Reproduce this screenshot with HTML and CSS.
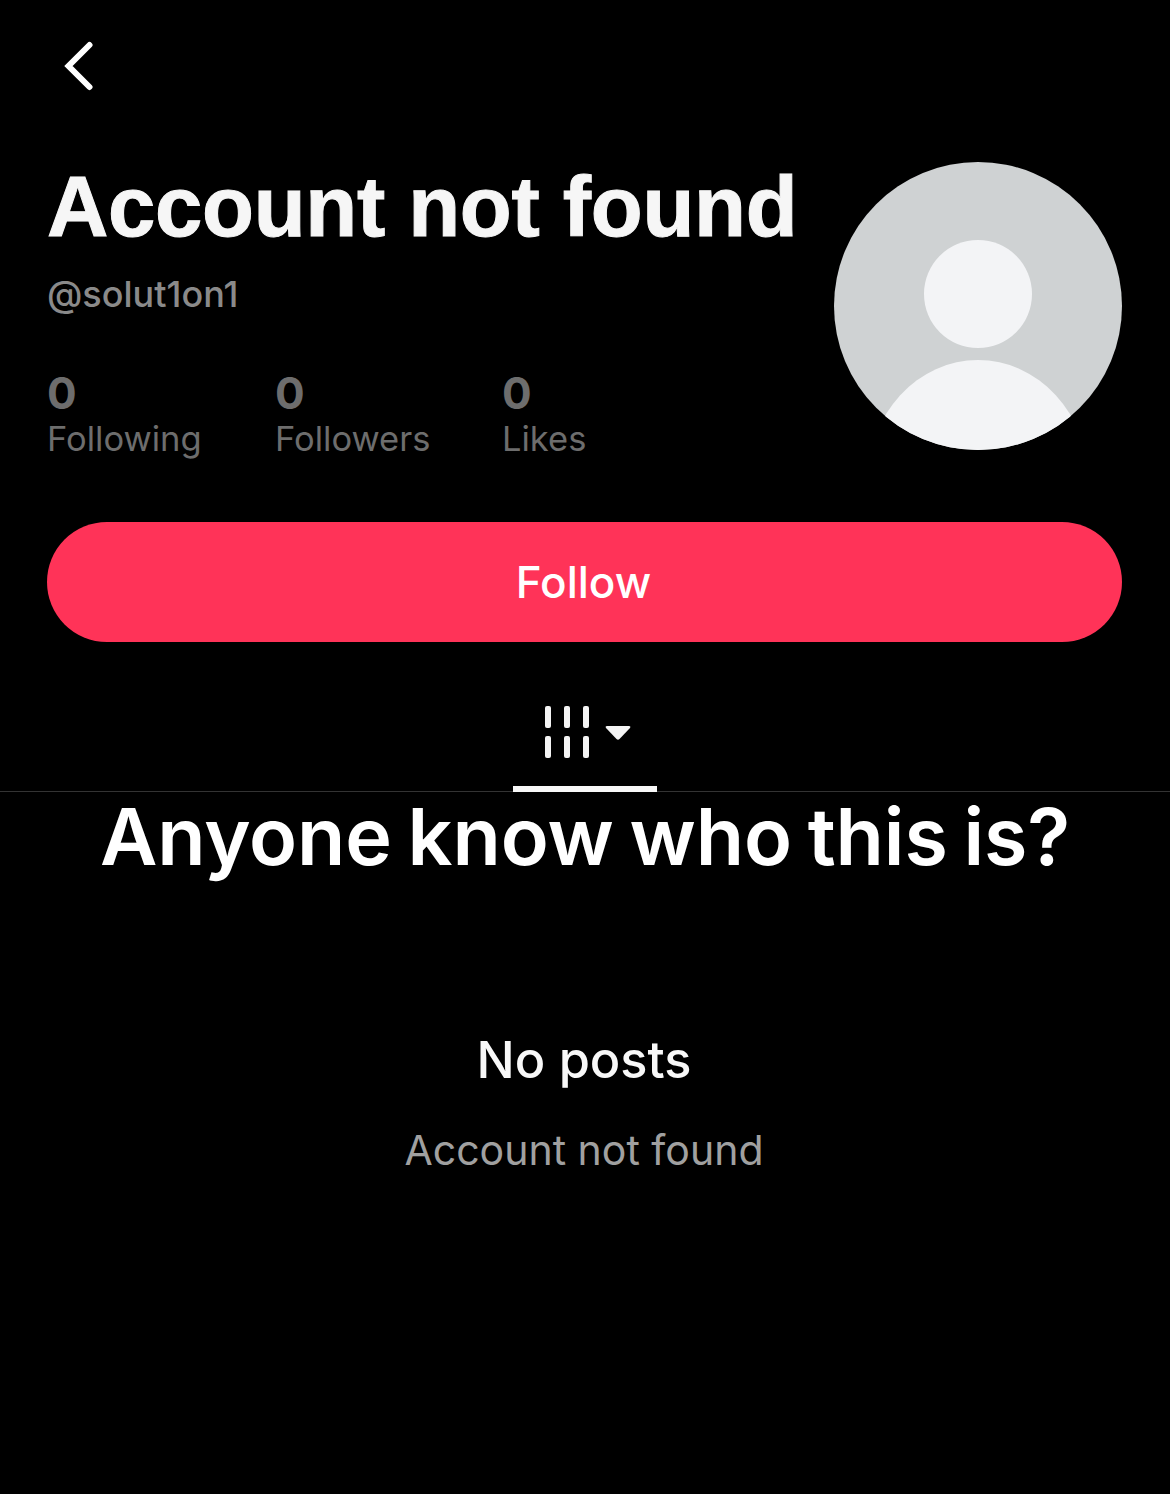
FILE: index.html
```html
<!DOCTYPE html>
<html lang="en">
<head>
<meta charset="utf-8">
<title>Account not found</title>
<link rel="stylesheet" href="styles.css">
</head>
<body>
<main class="page">
  <header class="topbar">
    <svg class="back" width="32" height="50" viewBox="0 0 32 50"><path d="M26.500 4 L5.500 25 L26.500 46" fill="none" stroke="#fff" stroke-width="6" stroke-linecap="round" stroke-linejoin="miter"/></svg>
  </header>
  <section class="profile">
    <div class="info">
      <h1 class="title">Account not found</h1>
      <div class="handle">@solut1on1</div>
      <div class="stats">
        <div class="stat s1"><div class="num">0</div><div class="label">Following</div></div>
        <div class="stat s2"><div class="num">0</div><div class="label">Followers</div></div>
        <div class="stat"><div class="num">0</div><div class="label">Likes</div></div>
      </div>
    </div>
    <svg class="avatar" width="288" height="288" viewBox="0 0 288 288">
      <defs><clipPath id="c"><circle cx="144" cy="144" r="144"/></clipPath></defs>
      <circle cx="144" cy="144" r="144" fill="#cfd2d3"/>
      <circle cx="144" cy="132" r="54" fill="#f3f4f6"/>
      <ellipse cx="144" cy="318" rx="110" ry="120" fill="#f3f4f6" clip-path="url(#c)"/>
    </svg>
  </section>
  <button class="follow">Follow</button>
  <nav class="tabs">
    <div class="tab">
      <svg width="88" height="54" viewBox="0 0 88 54">
        <g fill="#f4f4f4">
          <rect x="2" y="1" width="6" height="22" rx="2"/><rect x="21" y="1" width="6" height="22" rx="2"/><rect x="40" y="1" width="6" height="22" rx="2"/>
          <rect x="2" y="31" width="6" height="22" rx="2"/><rect x="21" y="31" width="6" height="22" rx="2"/><rect x="40" y="31" width="6" height="22" rx="2"/>
          <path d="M64 21 H86 Q88 21 87 23 L76.500 34 Q75 35.500 73.500 34 L63 23 Q62 21 64 21 Z"/>
        </g>
      </svg>
    </div>
  </nav>
  <p class="caption">Anyone know who this is?</p>
  <section class="empty">
    <h2 class="empty-title">No posts</h2>
    <p class="empty-sub">Account not found</p>
  </section>
</main>
</body>
</html>
```
FILE: styles.css
```css
* { box-sizing: border-box; }
html, body { margin: 0; padding: 0; background: #000; }
body { font-family: Inter, "Liberation Sans", sans-serif; color: #fff; height: 1494px; overflow: hidden; }
.page { width: 1170px; }
.topbar { height: 162px; padding: 41px 0 0 63px; }
.back { display: block; }
.profile { display: flex; justify-content: space-between; padding: 0 48px 0 47px; height: 360px; }
.info { display: flex; flex-direction: column; }
.title { margin: 0; font-family: "Liberation Sans", Arial, sans-serif; font-size: 85px; line-height: 90px; font-weight: 700; letter-spacing: -0.3px; color: #f6f6f6; -webkit-text-stroke: 1px #f6f6f6; white-space: nowrap; }
.handle { margin-top: 20px; font-size: 36px; line-height: 44px; font-weight: 500; color: #8a8a8a; }
.stats { display: flex; margin-top: 52px; }
.stat { color: #6d6d6d; }
.s1 { width: 228px; }
.s2 { width: 227px; }
.num { font-size: 44px; line-height: 50px; font-weight: 700; }
.label { font-size: 34.5px; line-height: 42px; }
.avatar { display: block; flex: none; }
.follow { display: block; width: 1075px; height: 120px; margin-left: 47px; padding: 0 2px 0 0; border: 0; border-radius: 60px; background: #ff3358; color: #fff; font-family: inherit; font-size: 44px; font-weight: 500; }
.tabs { height: 150px; border-bottom: 1px solid #333; display: flex; justify-content: center; }
.tab { width: 144px; height: 150px; border-bottom: 6px solid #f8f8f8; padding: 63px 0 0 30px; }
.tab svg { display: block; }
.caption { margin: 0; text-align: center; font-size: 79px; line-height: 88px; font-weight: 600; letter-spacing: -0.12px; word-spacing: -4px; }
.empty { text-align: center; padding: 150px 2px 0 0; }
.empty-title { margin: 0; font-size: 50.5px; line-height: 60px; font-weight: 500; color: #f8f8f8; }
.empty-sub { margin: 35px 0 0; font-size: 41px; line-height: 50px; color: #a0a0a0; }
```
